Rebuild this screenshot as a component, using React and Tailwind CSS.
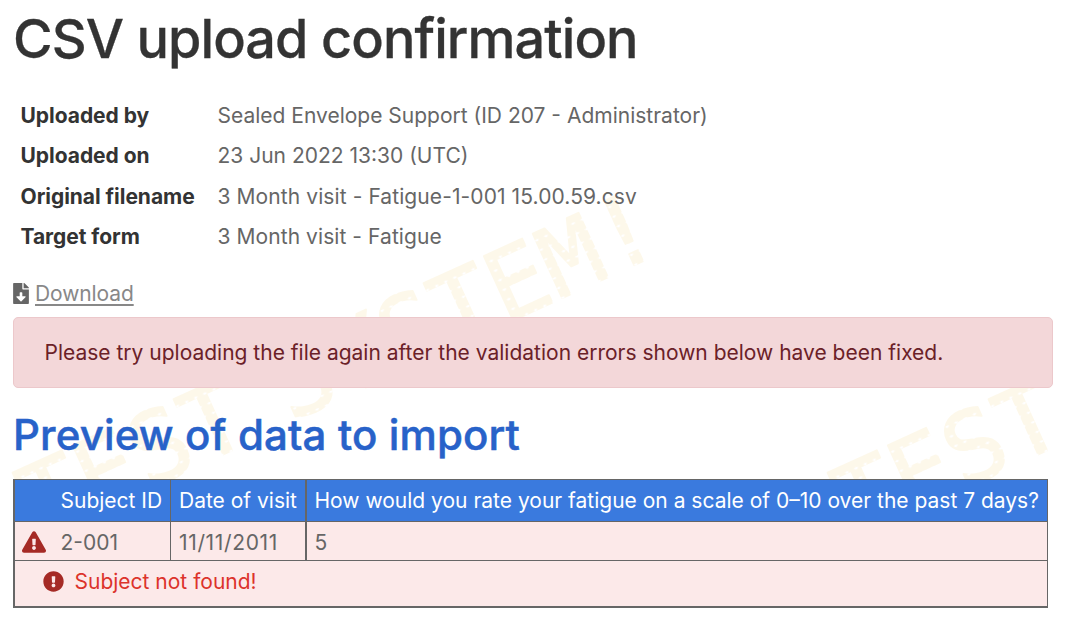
import { FaFileDownload, FaExclamationTriangle, FaExclamationCircle } from 'react-icons/fa';

const DETAILS = [
  { label: 'Uploaded by', value: 'Sealed Envelope Support (ID 207 - Administrator)' },
  { label: 'Uploaded on', value: '23 Jun 2022 13:30 (UTC)' },
  {
    label: 'Original filename',
    value: '3 Month visit - Fatigue-1-001 15.00.59.csv',
    className: 'tracking-[0.09px]',
  },
  { label: 'Target form', value: '3 Month visit - Fatigue', className: 'tracking-[0.07px]' },
];

// Repeating background text, one entry per word
const WATERMARKS = [
  { text: 'TEST', x: 40, y: 538 },
  { text: 'SYSTEM!', x: 290, y: 422 },
  { text: 'TEST', x: 855, y: 538 },
];

function Watermark() {
  return (
    <svg
      className="absolute inset-0 w-full h-full pointer-events-none select-none"
      viewBox="0 0 1066 626"
      aria-hidden="true"
    >
      <defs>
        {/* dot-matrix texture */}
        <pattern id="dots" width="10" height="10.5" patternUnits="userSpaceOnUse">
          <ellipse cx="5" cy="5.25" rx="7" ry="5.5" fill="#fdf8ea" />
        </pattern>
      </defs>
      {WATERMARKS.map(({ text, x, y }) => (
        <text
          key={x}
          transform={`translate(${x} ${y}) rotate(-24.5)`}
          className="font-['DejaVu_Sans_Mono',monospace] text-[97px] tracking-[0.6px]"
          fill="url(#dots)"
          stroke="url(#dots)"
          strokeWidth="2"
          strokeLinejoin="round"
        >
          {text}
        </text>
      ))}
    </svg>
  );
}

function Details() {
  return (
    <dl className="mt-[25px] ml-[7.5px] grid grid-cols-[197px_1fr] auto-rows-[40.33px] items-center">
      {DETAILS.map(({ label, value, className }) => (
        <div key={label} className="contents">
          <dt className="font-bold text-[#333] tracking-[-0.04px]">{label}</dt>
          <dd className={className}>{value}</dd>
        </div>
      ))}
    </dl>
  );
}

function PreviewTable() {
  return (
    <table className="mt-[20px] w-[1035px] table-fixed border-separate border-spacing-0 border-t border-l-2 border-r border-b-2 border-[#666] bg-[#fce9e9]">
      <colgroup>
        <col className="w-[156px]" />
        <col className="w-[136px]" />
        <col />
      </colgroup>
      <thead>
        <tr className="h-[42px] bg-[#3a7ade] text-left text-white">
          <th className="border-r border-b border-[#666] p-0 pl-[45.5px] font-normal whitespace-nowrap">Subject ID</th>
          <th className="border-r-2 border-b border-[#666] p-0 pl-[8px] font-normal whitespace-nowrap">Date of visit</th>
          <th className="border-b border-[#666] p-0 pl-[7.5px] font-normal whitespace-nowrap">
            How would you rate your fatigue on a scale of 0–10 over the past 7 days?
          </th>
        </tr>
      </thead>
      <tbody>
        <tr className="h-[39px]">
          <td className="border-r border-b border-[#666] p-0 pt-[4px] pl-[7px]">
            <div className="flex items-center">
              <FaExclamationTriangle className="mb-[2px] size-[24px] text-[#a52a25]" />
              <span className="ml-[14.5px]">2-001</span>
            </div>
          </td>
          <td className="border-r-2 border-b border-[#666] p-0 pt-[4px] pl-[8px] tracking-[0.65px]">11/11/2011</td>
          <td className="border-b border-[#666] p-0 pt-[4px] pl-[7.5px]">5</td>
        </tr>
        <tr className="h-[45px]">
          <td colSpan={3} className="p-0 pb-[3px] pl-[28px]">
            <div className="flex items-center text-[#dc332b]">
              <FaExclamationCircle className="mb-[2px] size-[21px] text-[#a52a25]" />
              <span className="ml-[10.5px]">Subject not found!</span>
            </div>
          </td>
        </tr>
      </tbody>
    </table>
  );
}

export default function App() {
  return (
    <div className="relative w-[1066px] h-[626px] overflow-hidden bg-white font-['Inter',sans-serif] text-[21px] leading-[30px] text-[#666]">
      <Watermark />
      <main className="relative px-[13px]">
        <h1 className="pt-[7px] text-[54px] leading-[64px] font-medium tracking-[-0.93px] text-[#333] [-webkit-text-stroke:0.3px_#333]">
          CSV upload confirmation
        </h1>
        <Details />
        <div className="mt-[22px] flex items-center h-[30px]">
          <FaFileDownload className="mb-[2px] w-[16px] h-[21px]" />
          <a href="#" className="ml-[6px] text-[#888] underline decoration-2 underline-offset-[3px] tracking-[-0.1px]">
            Download
          </a>
        </div>
        <div className="mt-[8px] flex h-[71px] w-[1040px] items-center rounded-[5px] border border-[#ecc8cb] bg-[#f3d7d9] pl-[30.5px] text-[#6b2128]">
          Please try uploading the file again after the validation errors shown below have been fixed.
        </div>
        <h2 className="mt-[22px] mb-[-1px] text-[42px] leading-[50px] font-medium tracking-[0.13px] text-[#2862c9] [-webkit-text-stroke:0.5px_#2862c9]">
          Preview of data to import
        </h2>
        <PreviewTable />
      </main>
    </div>
  );
}
